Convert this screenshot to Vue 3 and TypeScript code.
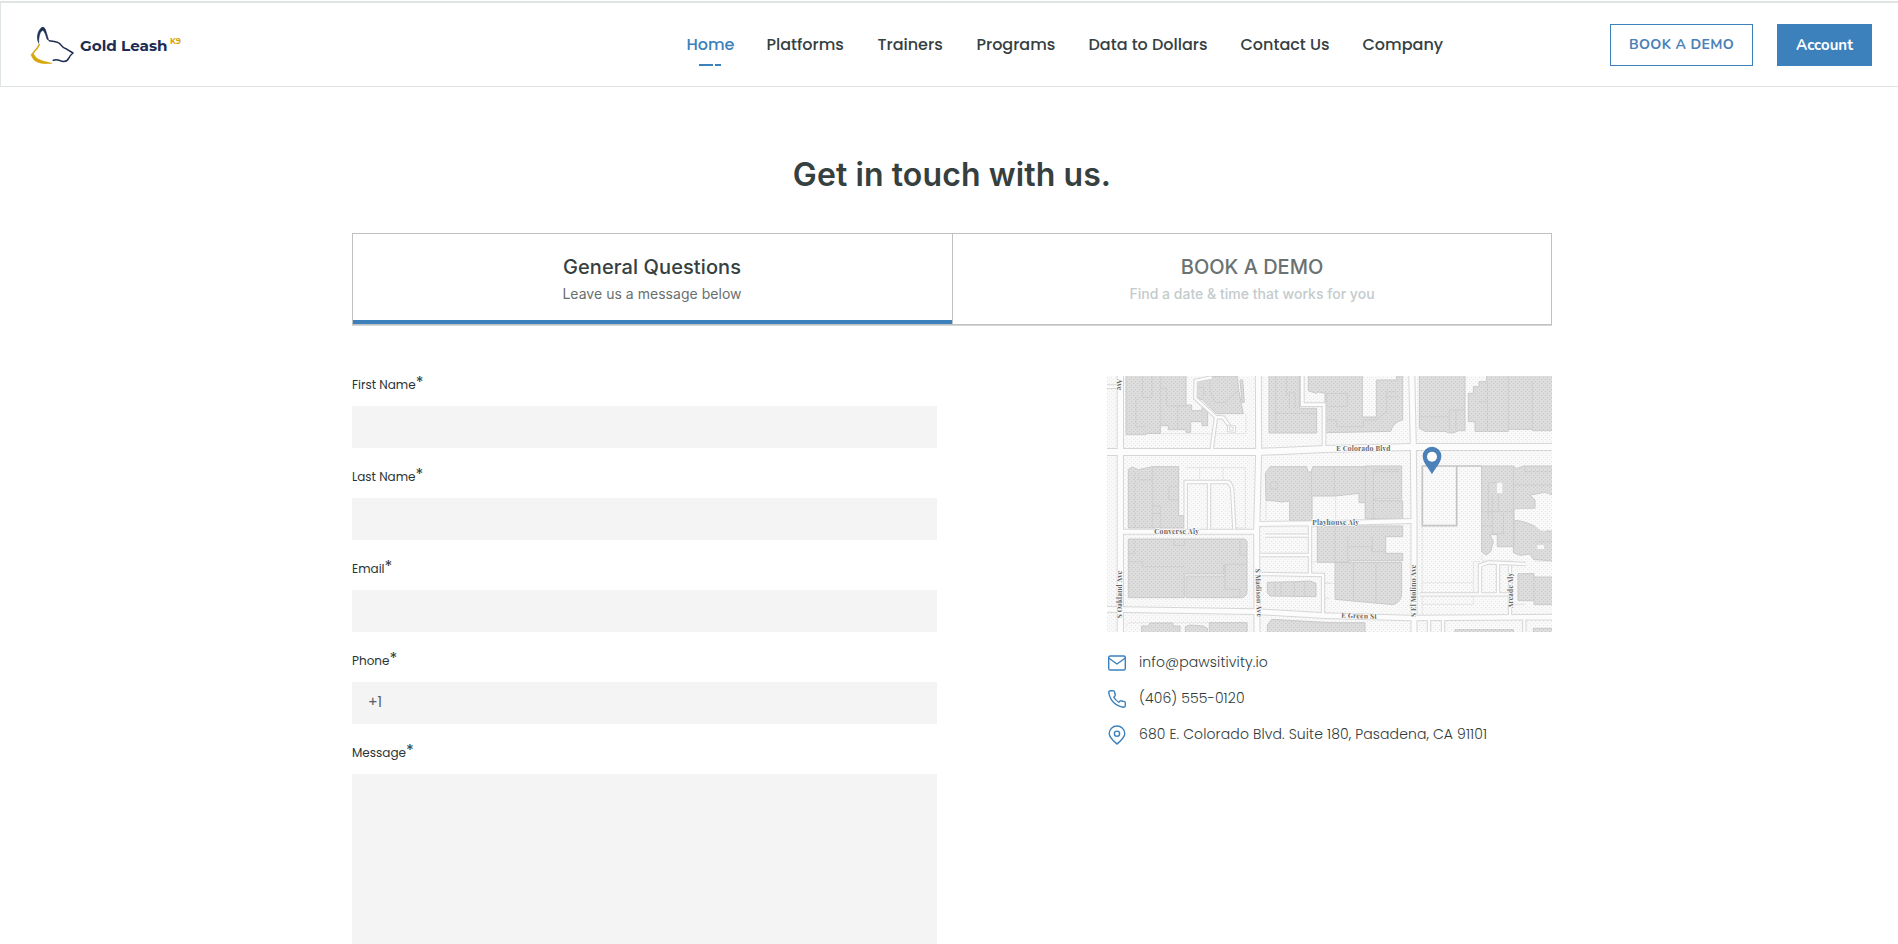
<script setup lang="ts">
interface NavItem { label: string; cls: string; active?: boolean }
const navItems: NavItem[] = [
  { label: 'Home', cls: 'n-home', active: true },
  { label: 'Platforms', cls: 'n-platforms' },
  { label: 'Trainers', cls: 'n-trainers' },
  { label: 'Programs', cls: 'n-programs' },
  { label: 'Data to Dollars', cls: 'n-data' },
  { label: 'Contact Us', cls: 'n-contact' },
  { label: 'Company', cls: 'n-company' },
]

const fields = [
  { id: 'first', label: 'First Name', value: '' },
  { id: 'last', label: 'Last Name', value: '' },
  { id: 'email', label: 'Email', value: '' },
  { id: 'phone', label: 'Phone', value: '+1' },
]

interface Road { d: string; w: number }
const roads: Road[] = [
  { d: 'M0 50H55', w: 8 },
  { d: 'M61 0V800', w: 16 },
  { d: 'M0 246H470L675 237L930 231H1400', w: 18 },
  { d: 'M475 0L476 245L470 480L471 800', w: 15 },
  { d: 'M61 485H470', w: 12 },
  { d: 'M0 718L470 725L675 737L930 744L1400 741', w: 14 },
  { d: 'M935 0L940 230L942 450L942 800', w: 15 },
  { d: 'M470 462L675 460L940 453', w: 12 },
  { d: 'M257 478V336H385Q396 345 397 365L403 478M327 337V478', w: 7 },
  { d: 'M335 22L287 32L286 85L348 141L335 238M348 141L370 143L388 168', w: 7 },
  { d: 'M607 0V104H672V238', w: 8 },
  { d: 'M495 497H625M480 555H630M630 465V612M480 612L669 615V730', w: 7 },
  { d: 'M960 673H1225M1140 673V586L1165 577L1277 582M1194 582V673M1230 588V740M987 748V800M1029 748V800M1273 748V800', w: 7 },
]

const buildings: string[] = [
  'M78 0H258V105H275V122H306V114H323V167H306V155H272V187H258V179H205V167H181V190H138V194H78Z',
  'M330 20L412 18L416 60L430 131H350L308 90L288 82V40Z',
  'M420 30H428L433 97H426Z',
  'M507 0H598V115H650V189H507Z',
  'M625 0H787V141H829V30H890V18H908V150Q880 155 872 184L675 188V70L655 66L648 70L625 62Z',
  'M85 298L97 291L115 299L157 290H236V437H251V474H85Z',
  'M85 507H435L441 515V665Q440 680 425 683H258V618H375V586H372V612H253V683H85Z',
  'M496 310L510 290H620L624 306H634L638 290H796V288H905V387H825V392H908V446H796V398H777V370L750 373L705 378H636V452H569V393L545 396L525 393L498 391Z',
  'M652 468H908V500H857V550H908V572H746V577H652Z',
  'M705 577H905V670Q905 695 880 704L705 688Z',
  'M502 637L590 635L630 633L648 640V680L510 678L502 668Z',
  'M502 765L515 748L690 758H795V800H502Z',
  'M125 768H145L150 759H218L220 768H240V800H125Z',
  'M256 770L270 765L310 768L322 775V800H256Z',
  'M328 758H441V800H328Z',
  'M958 0H1095V182H1075Q1055 195 1035 184H975L958 175Z',
  'M1105 70H1120V50H1137V35H1160V0H1500V182H1300L1295 178H1225V184H1125V155H1105Z',
  'M1145 288H1240L1250 296L1270 288H1360V375L1330 368L1290 375L1305 390V415L1242 418V450L1270 455L1345 483H1360V573L1300 568L1290 552L1260 556L1240 548V530H1192V494H1170L1180 515L1172 545L1158 555L1145 545Z',
  'M1254 611H1302V621H1360V704H1302V692H1254Z',
  'M1065 779H1240V800H1065Z',
  'M1300 775H1400V800H1300Z',
]
const details =
  'M127 0V82H156V0M181 0V190M108 82V170H138M181 55H200V108H258M233 108V178M330 22V60L345 97H375L416 60M288 52H312V78M527 18V189M527 130H650M568 115V67H585V115M560 18V80M680 70H742V109H680ZM680 150H710V170H790V150H829L860 125V65H890M855 80H895M104 305V474M157 290V474M116 310V330H157M207 350V390H236M207 350H236M157 408H181V474M157 430H181M85 575H127V590H253M437 583H375V658H420V683M104 507V550H85M420 507V555H437M222 507V526H253V507M511 340L520 334L532 340V357H511ZM634 306V378M703 290V375M796 290V446M820 298V446M820 298H895V305H820M705 470V577M743 500V577M760 577V695M828 577V700M746 530H815V545H857M817 500V545M525 637V678M543 637V678M583 635V678M614 635V678M958 140H1048V120H1092M1048 140V180M1068 120V180M1225 0V178M1297 35V182M1162 35V182M1137 95H1162M1165 338H1195V425M1165 338V450M1240 290V530M1145 425H1240M1177 372V490H1215M1145 467H1177M1210 430V494M1242 450V530M1302 621V692M1308 515H1360M1240 345H1360M1275 288V305H1360'
const parcels =
  'M78 191H438V131M299 293V336M369 293V336M436 293V474H403M258 293H436M498 391V450M636 378V452M690 470H635M669 638H690M669 685H690M635 575H700M707 380V452M967 288V745M967 638H1120M967 703H1120M1120 575V703M1120 575H1140M1146 555V573H1240M1275 703H1230M78 770Q80 758 92 758H441M441 758V800M1302 573H1360M675 640H705'
</script>

<template>
  <div class="page">
    <header class="header">
      <a class="logo">
        <svg class="dog" viewBox="90 75 135 117" width="45" height="39" fill="none" stroke-linecap="round" stroke-linejoin="round">
          <path d="M116 126C108 110 113 90 124 80Q131 75 136 85Q142 103 146 118L141 115C138 104 134 92 129 88C121 90 116 104 116 126Z" fill="#1c2c52" stroke="#1c2c52" stroke-width="1.5" />
          <path d="M148 119C162 122 174 121 181 130Q188 140 201 145L219 156Q211 162 206 172C200 184 187 182 178 178Q169 175 160 178" stroke="#1c2c52" stroke-width="4.6" />
          <path d="M118 131Q112 143 104 150L96 161" stroke="#d6a60b" stroke-width="4.5" />
          <path d="M94 160L99 157Q105 167 112 173Q130 182 156 187Q117 191 102 177Q97 170 94 164Z" fill="#d6a60b" stroke="#d6a60b" stroke-width="1.5" />
        </svg>
        <span class="brand">Gold Leash</span><span class="k9">K9</span>
      </a>
      <nav class="nav">
        <a v-for="n in navItems" :key="n.label" :class="['nav-item', n.cls, { active: n.active }]">{{ n.label }}</a>
      </nav>
      <div class="actions">
        <button class="btn outline">BOOK A DEMO</button>
        <button class="btn solid">Account</button>
      </div>
    </header>

    <main class="main">
      <h1>Get in touch with us.</h1>
      <div class="tabs">
        <div class="tab current">
          <div class="tab-title">General Questions</div>
          <div class="tab-sub">Leave us a message below</div>
        </div>
        <div class="tab second">
          <div class="tab-title t2">BOOK A DEMO</div>
          <div class="tab-sub s2">Find a date &amp; time that works for you</div>
        </div>
      </div>

      <div class="columns">
        <form class="form">
          <div v-for="f in fields" :key="f.id" class="field">
            <label>{{ f.label }}<span class="star">*</span></label>
            <div class="input">{{ f.value }}</div>
          </div>
          <div class="field">
            <label>Message<span class="star">*</span></label>
            <div class="input area"></div>
          </div>
        </form>

        <aside class="side">
          <svg class="map" width="445" height="256" viewBox="21 18 1335 768">
            <defs>
              <pattern id="dots" width="12" height="12" patternUnits="userSpaceOnUse">
                <circle cx="4.5" cy="4.5" r="1.7" fill="#000" opacity=".08" />
                <circle cx="10.5" cy="10.5" r="1.7" fill="#000" opacity=".08" />
              </pattern>
            </defs>
            <rect width="1400" height="820" fill="#f9f9f9" />
            <path :d="parcels" fill="none" stroke="#e4e4e4" stroke-width="2.5" />
            <path v-for="(b, i) in buildings" :key="'b' + i" :d="b" fill="#dcdcdc" stroke="#cbcbcb" stroke-width="3" stroke-linejoin="round" />
            <path :d="details" fill="none" stroke="#cecece" stroke-width="2.5" />
            <path d="M1191 338H1207V370H1191ZM1312 525H1332V537H1312ZM1308 376Q1330 366 1347 372L1354 385V470Q1340 488 1320 480L1303 466V450L1245 450V418L1308 416Z" fill="#f9f9f9" />
            <rect width="1400" height="820" fill="url(#dots)" />
            <path d="M967 288H1070V467H967ZM1070 288H1145" fill="none" stroke="#c4c4c4" stroke-width="5" />
            <path v-for="(r, i) in roads" :key="'c' + i" :d="r.d" fill="none" stroke="#d6d6d6" :stroke-width="r.w + 6" />
            <path v-for="(r, i) in roads" :key="'r' + i" :d="r.d" fill="none" stroke="#fcfcfc" :stroke-width="r.w" />
            <path d="M383 165L407 168L406 187L382 185ZM389 170L400 173L399 181L388 180Z" fill="#fff" stroke="#d8d8d8" stroke-width="3" />
            <g class="street">
              <text x="163" y="493" textLength="134">Converse Aly</text>
              <text x="637" y="466" textLength="140">Playhouse Aly</text>
              <text x="709" y="242" textLength="162">E Colorado Blvd</text>
              <text transform="translate(724 743) rotate(2)" textLength="106">E Green St</text>
              <text transform="translate(67 745) rotate(-90)" textLength="143">S Oakland Ave</text>
              <text transform="translate(466 596) rotate(88)" textLength="145">S Madison Ave</text>
              <text transform="translate(949 741) rotate(-90)" textLength="157">S El Molino Ave</text>
              <text transform="translate(1239 715) rotate(-90)" textLength="107">Arcade Aly</text>
              <text transform="translate(51 27) rotate(90)" textLength="34">Ave</text>
            </g>
            <path d="M996 313C990 298 968 280 968 258A28 28 0 0 1 1024 258C1024 280 1002 298 996 313Z" fill="#4b80b8" />
            <circle cx="996" cy="260" r="15" fill="#fff" />
          </svg>

          <ul class="contacts">
            <li>
              <svg width="20" height="20" viewBox="0 0 20 20"><rect x="1.7" y="3" width="16.6" height="14" rx="1.6" /><path d="M2 5.2L10 11L18 5.2" /></svg>
              <span>info@pawsitivity.io</span>
            </li>
            <li>
              <svg width="20" height="20" viewBox="0 0 24 24"><path stroke-width="1.7" d="M22 16.92v3a2 2 0 0 1-2.18 2 19.79 19.79 0 0 1-8.63-3.07 19.5 19.5 0 0 1-6-6 19.79 19.79 0 0 1-3.07-8.67A2 2 0 0 1 4.11 2h3a2 2 0 0 1 2 1.72c.127.96.361 1.903.7 2.81a2 2 0 0 1-.45 2.11L8.09 9.91a16 16 0 0 0 6 6l1.27-1.27a2 2 0 0 1 2.11-.45c.907.339 1.85.573 2.81.7A2 2 0 0 1 22 16.92z" /></svg>
              <span>(406) 555-0120</span>
            </li>
            <li>
              <svg width="20" height="20" viewBox="0 0 20 20"><path d="M10 19C7.2 16.4 2.2 12.6 2.2 8.4A7.8 7.4 0 0 1 17.8 8.4C17.8 12.6 12.8 16.4 10 19Z" /><circle cx="10" cy="8.7" r="2.6" /></svg>
              <span>680 E. Colorado Blvd. Suite 180, Pasadena, CA 91101</span>
            </li>
          </ul>
        </aside>
      </div>
    </main>
  </div>
</template>

<style>
body { margin: 0; background: #fff; }
</style>

<style scoped>
* { box-sizing: border-box; }
.page { height: 944px; overflow: hidden; font-family: Poppins, Inter, sans-serif; color: #35403f; padding-top: 1px; background: #fff; }
.header { height: 86px; border-top: 2px solid #e0e5e3; border-left: 1px solid #dfe5e4; border-bottom: 1px solid #e0e3e3; display: grid; grid-template-columns: 685.5px 1fr auto; align-items: center; padding-right: 26px; }
.logo { display: flex; align-items: center; padding-left: 29px; height: 83px; }
.dog { margin-top: 1px; }
.brand { font: 700 15.2px/20px Montserrat, "Open Sans", sans-serif; color: #1c2c52; margin: 2px 0 0 5px; width: 90px; white-space: nowrap; }
.k9 { font: 700 8px/10px Montserrat, "Open Sans", sans-serif; color: #d6a60b; margin-top: -7px; }
.nav { display: flex; gap: 32px; font-size: 16px; font-weight: 500; line-height: 24px; }
.nav-item { position: relative; white-space: nowrap; }
.n-home { width: 48px; }
.n-platforms { width: 79px; }
.n-trainers { width: 67px; }
.n-programs { width: 80px; }
.n-data { width: 120px; }
.n-contact { width: 90px; }
.n-company { width: 82px; }
.active { color: #3c80bc; }
.active::before, .active::after { content: ""; position: absolute; top: 31px; height: 2px; background: #3c80bc; }
.active::before { left: 12.5px; width: 14px; }
.active::after { left: 28.5px; width: 6px; }
.actions { display: flex; gap: 24px; }
.btn { height: 42px; border: 1px solid #3c80bc; padding: 0; font-family: Nunito, "Nunito Sans", "Open Sans", sans-serif; font-size: 14px; font-weight: 700; text-align: center; white-space: nowrap; }
.outline { width: 143px; background: #fff; color: #4a81b7; letter-spacing: .36px; }
.solid { width: 95px; background: #3c80bc; color: #fff; font-size: 15px; }
.main { width: 1200px; margin-left: 352px; }
h1 { font: 600 32px/40px Inter, sans-serif; margin: 68px 0 0; text-align: center; color: #35403f; letter-spacing: .1px; }
.tabs { margin-top: 38px; height: 92px; display: grid; grid-template-columns: 600px 598px; border: 1px solid #bfc1c1; box-shadow: 0 1px 0 #d5d8d8; }
.tab { text-align: center; padding-top: 21px; font-family: Inter, sans-serif; }
.current { border-right: 1px solid #bfc1c1; box-shadow: inset 0 -4px #3c80bc; padding-right: 1px; }
.tab-title { font-size: 20px; font-weight: 500; line-height: 24px; letter-spacing: .1px; }
.t2 { color: #6a7272; letter-spacing: 0; }
.tab-sub { margin-top: 5px; font-size: 14px; line-height: 20px; color: #68706f; letter-spacing: .03px; }
.s2 { color: #c3cbcc; font-weight: 500; letter-spacing: .02px; }
.columns { display: flex; justify-content: space-between; margin-top: 50px; }
.form { width: 585px; }
.field { height: 92px; }
label { display: flex; height: 31px; font-size: 12px; line-height: 18px; color: #293334; padding-top: 1px; }
.star { font-size: 16px; line-height: 14px; font-weight: 400; }
.input { height: 42px; background: #f4f4f4; padding: 0 16px; font-size: 14px; line-height: 41px; color: #56606a; }
.area { height: 220px; }
.side { width: 445px; padding-top: 1px; }
.map { display: block; }
.street { font: 700 21px "Playfair Display", "Liberation Serif", serif; fill: #636363; stroke: #fafafa; stroke-width: 4px; paint-order: stroke; }
.contacts { list-style: none; margin: 20px 0 0; padding: 0; }
.contacts li { height: 36px; display: flex; align-items: flex-start; gap: 12px; font-size: 14px; line-height: 21px; color: #303a3a; font-weight: 300; letter-spacing: .11px; white-space: nowrap; }
.contacts svg { fill: none; stroke: #3c80bc; stroke-width: 1.4; stroke-linecap: round; stroke-linejoin: round; margin-top: 1px; }
</style>
